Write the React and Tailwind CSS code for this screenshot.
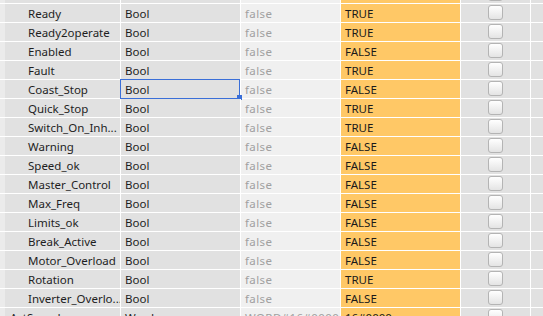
import React from "react";

const rows = [
  ["Ready", "Bool", "false", "TRUE"],
  ["Ready2operate", "Bool", "false", "TRUE"],
  ["Enabled", "Bool", "false", "FALSE"],
  ["Fault", "Bool", "false", "TRUE"],
  ["Coast_Stop", "Bool", "false", "FALSE", true],
  ["Quick_Stop", "Bool", "false", "TRUE"],
  ["Switch_On_Inh...", "Bool", "false", "TRUE"],
  ["Warning", "Bool", "false", "FALSE"],
  ["Speed_ok", "Bool", "false", "FALSE"],
  ["Master_Control", "Bool", "false", "FALSE"],
  ["Max_Freq", "Bool", "false", "FALSE"],
  ["Limits_ok", "Bool", "false", "FALSE"],
  ["Break_Active", "Bool", "false", "FALSE"],
  ["Motor_Overload", "Bool", "false", "FALSE"],
  ["Rotation", "Bool", "false", "TRUE"],
  ["Inverter_Overlo...", "Bool", "false", "FALSE"],
];

function Checkbox() {
  return (
    <div className="w-[15px] h-[15px] rounded-[3px] border border-[#b4b4b4] bg-gradient-to-b from-[#ffffff] to-[#e4e4e4]" />
  );
}

function Row({ name, type, def, mon, selected, indent = "pl-[23px]" }) {
  return (
    <div className="flex h-[19px] border-b border-white text-[11.5px] leading-[19px]">
      <div className="w-[5px] h-[18px] bg-[#ebebeb]" />
      <div className={`w-[116px] h-[18px] bg-[#e1e1e1] border-r border-white ${indent} text-[#1e1e1e] whitespace-nowrap overflow-hidden`}>
        {name}
      </div>
      <div className="relative w-[120px] h-[18px] bg-[#e1e1e1] border-r border-white pl-[4px] text-[#1e1e1e]">
        {type}
        {selected && (
          <>
            <div className="absolute left-[-1px] top-[-1px] w-[120px] h-[20px] border border-[#3a6fd8]" />
            <div className="absolute left-[116px] top-[15px] w-[5px] h-[5px] bg-[#3a6fd8]" />
          </>
        )}
      </div>
      <div className="w-[100px] h-[18px] bg-[#f0f0f0] border-r border-white pl-[4px] text-[#a0a0a0] tracking-[0.4px] whitespace-nowrap overflow-hidden">
        {def}
      </div>
      <div className="w-[120px] h-[18px] bg-[#ffc866] border-r border-white pl-[4px] text-[#1a1a1a]">
        {mon}
      </div>
      <div className="w-[70px] h-[18px] bg-[#e1e1e1] border-r border-white flex items-start justify-center pt-[1px]">
        <Checkbox />
      </div>
      <div className="flex-1 h-[18px] bg-[#e1e1e1]" />
    </div>
  );
}

export default function App() {
  return (
    <div className="w-[543px] h-[316px] overflow-hidden bg-white" style={{ fontFamily: '"Noto Sans", "Open Sans", sans-serif' }}>
      <div className="-mt-[15px]">
        <Row name="" type="" def="" mon="" />
        {rows.map((r, i) => (
          <Row key={i} name={r[0]} type={r[1]} def={r[2]} mon={r[3]} selected={r[4]} />
        ))}
        <Row name="ActSpeed" type="Word" def="WORD#16#0000" mon="16#0000" indent="pl-[5px]" />
      </div>
    </div>
  );
}
